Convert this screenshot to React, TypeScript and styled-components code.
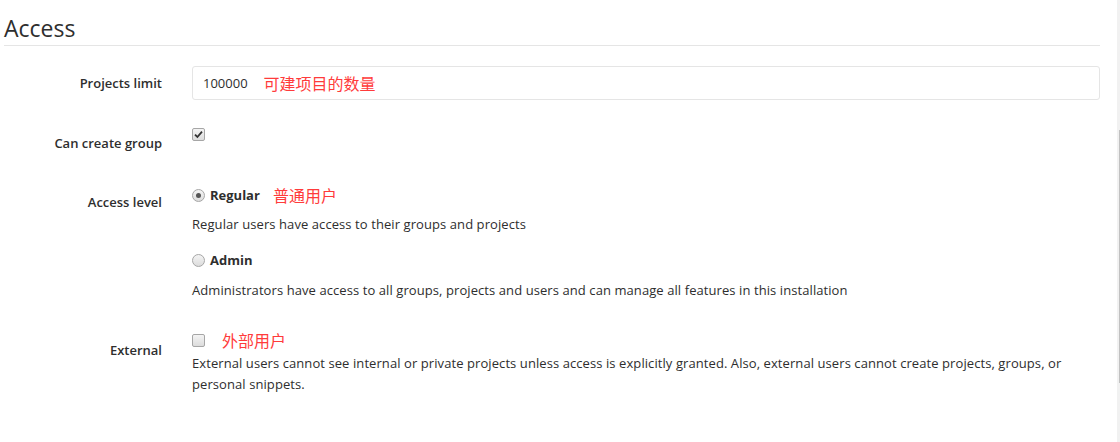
import React from 'react';
import styled, { createGlobalStyle } from 'styled-components';

const GlobalStyle = createGlobalStyle`
  html, body {
    margin: 0;
    padding: 0;
    background: #fff;
  }
  body {
    font-family: 'Open Sans', 'Noto Sans CJK SC', sans-serif;
    font-size: 13px;
    color: #2e2e2e;
  }
`;

const Page = styled.div`
  display: flex;
  width: 1120px;
  height: 442px;
  overflow: hidden;
`;

const Main = styled.div`
  flex: 1;
  padding: 0 17px 0 4px;
`;

const ScrollTrack = styled.div`
  width: 3px;
  background: #f1f1f1;
  display: flex;
  flex-direction: column;
  align-items: flex-end;
`;

const ScrollThumb = styled.div`
  width: 1px;
  height: 253px;
  margin-top: 130px;
  background: #c1c1c1;
`;

const Legend = styled.h4`
  margin: 0;
  padding-top: 14px;
  height: 31px;
  font-size: 23px;
  font-weight: 400;
  line-height: 28px;
  color: #2e2e2e;
  border-bottom: 1px solid #e5e5e5;
`;

const Row = styled.div<{ $top: number }>`
  display: grid;
  grid-template-columns: 158px 1fr;
  column-gap: 30px;
  margin-top: ${(p) => p.$top}px;
`;

const Label = styled.label`
  text-align: right;
  font-weight: 600;
  padding-top: 7px;
  line-height: 20px;
`;

const Control = styled.div`
  display: flex;
  flex-direction: column;
`;

const InputBox = styled.div`
  height: 32px;
  border: 1px solid #e5e5e5;
  border-radius: 3px;
  display: flex;
  align-items: center;
  padding: 0 10px;
  gap: 16px;
  color: #2e2e2e;
`;

const Note = styled.span<{ $left?: number }>`
  color: #ff3b3b;
  font-family: 'Noto Sans CJK SC', sans-serif;
  font-size: 16px;
  margin-left: ${(p) => p.$left ?? 0}px;
`;

const Line = styled.div<{ $gap?: number; $top?: number }>`
  display: flex;
  align-items: center;
  height: 20px;
  gap: ${(p) => p.$gap ?? 5}px;
  margin-top: ${(p) => p.$top ?? 0}px;
`;

const OptionName = styled.span`
  font-weight: 700;
`;

const Help = styled.p<{ $top: number }>`
  margin: ${(p) => p.$top}px 0 0;
  line-height: 21px;
  letter-spacing: 0.08px;
  color: #2e2e2e;
`;

const BoxMark = styled.span<{ $round?: boolean }>`
  display: inline-flex;
  align-items: center;
  justify-content: center;
  width: 11px;
  height: 11px;
  border: 1px solid #a6a6a6;
  border-radius: ${(p) => (p.$round ? '50%' : '2px')};
  background: linear-gradient(#f4f4f4, #dcdcdc);
  flex: none;
`;

const Dot = styled.span`
  width: 5px;
  height: 5px;
  border-radius: 50%;
  background: #555;
`;

const Check = () => (
  <svg width="9" height="9" viewBox="0 0 9 9">
    <path d="M1 4.6 L3.4 7 L8 1.6" fill="none" stroke="#333" strokeWidth="1.8" />
  </svg>
);

const App = () => (
  <Page>
    <GlobalStyle />
    <Main>
      <Legend>Access</Legend>

      <Row $top={20}>
        <Label>Projects limit</Label>
        <InputBox>
          <span>100000</span>
          <Note>可建项目的数量</Note>
        </InputBox>
      </Row>

      <Row $top={26}>
        <Label>Can create group</Label>
        <Control>
          <Line style={{ alignItems: 'flex-start', paddingTop: 2 }}>
            <BoxMark>
              <Check />
            </BoxMark>
          </Line>
        </Control>
      </Row>

      <Row $top={32}>
        <Label>Access level</Label>
        <Control>
          <Line>
            <BoxMark $round>
              <Dot />
            </BoxMark>
            <OptionName>Regular</OptionName>
            <Note $left={8}>普通用户</Note>
          </Line>
          <Help $top={9}>Regular users have access to their groups and projects</Help>
          <Line $top={15}>
            <BoxMark $round />
            <OptionName>Admin</OptionName>
          </Line>
          <Help $top={10}>
            Administrators have access to all groups, projects and users and can manage all features in this
            installation
          </Help>
        </Control>
      </Row>

      <Row $top={32}>
        <Label>External</Label>
        <Control>
          <Line $gap={17} $top={-3}>
            <BoxMark />
            <Note>外部用户</Note>
          </Line>
          <Help $top={3}>
            External users cannot see internal or private projects unless access is explicitly granted. Also,
            external users cannot create projects, groups, or personal snippets.
          </Help>
        </Control>
      </Row>
    </Main>
    <ScrollTrack>
      <ScrollThumb />
    </ScrollTrack>
  </Page>
);

export default App;
